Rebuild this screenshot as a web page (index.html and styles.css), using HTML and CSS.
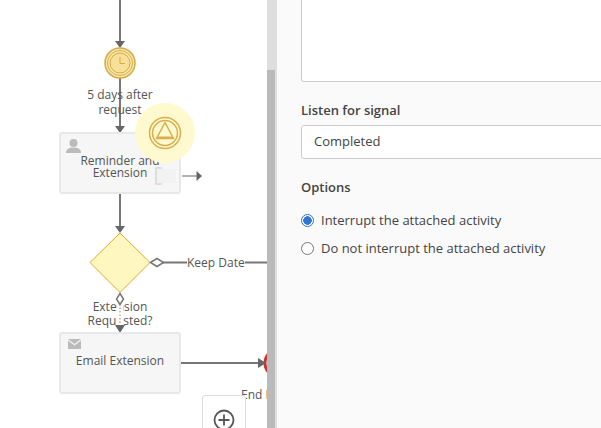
FILE: index.html
```html
<!DOCTYPE html>
<html lang="en">
<head>
<meta charset="utf-8">
<title>Signal event</title>
<link rel="stylesheet" href="styles.css">
</head>
<body>
<div class="app">
  <div class="canvas">
    <svg class="flows" width="267" height="428" viewBox="0 0 267 428">
      <g fill="none" stroke="#777" stroke-width="2">
        <path d="M120 0V42"/>
        <path d="M120 78V126"/>
        <path d="M120 193V226"/>
        <path d="M163 262.500H267"/>
        <path d="M180 363H258"/>
      </g>
      <path d="M182 176H197" stroke="#999" stroke-width="1.500" fill="none"/>
      <g fill="#666">
        <path d="M115 41h10l-5 7z"/>
        <path d="M115 126h10l-5 7z"/>
        <path d="M115 226h10l-5 7z"/>
        <path d="M196.500 171l5.500 5-5.500 5z"/>
      </g>
      <circle cx="120" cy="63" r="15" fill="#f9e8ae" stroke="#d5ab43" stroke-width="1.500"/>
      <circle cx="120" cy="63" r="12.500" fill="none" stroke="#d5ab43"/>
      <circle cx="120" cy="63" r="10" fill="#f8e09a" stroke="#d5ab43"/>
      <path d="M120 57v6.500h5" fill="none" stroke="#d5ab43" stroke-width="1"/>
      <path d="M120 233l30 29.500-30 30-30-30z" fill="#fff7c0" stroke="#dfa930" stroke-width="1"/>
      <circle cx="279" cy="363" r="14" fill="#fff" stroke="#c53535" stroke-width="3"/>
      <path d="M258 358l8 5-8 5z" fill="#666"/>
    </svg>

    <div class="label timer-label">5 days after<br>request</div>

    <div class="task task-one">
      <svg class="task-icon" width="15" height="14" viewBox="0 0 15 14"><circle cx="7.500" cy="4" r="4" fill="#bbb"/><path d="M0 14c0-4 3-5.500 7.500-5.500s7.500 1.500 7.500 5.500z" fill="#bbb"/></svg>
      <div class="task-name">Reminder and<br>Extension</div>
      <div class="marker"></div>
    </div>

    <div class="halo">
      <svg width="34" height="34" viewBox="0 0 34 34"><circle cx="17" cy="17" r="15.500" fill="none" stroke="#d9ae4c" stroke-width="1.500"/><circle cx="17" cy="17" r="12.500" fill="none" stroke="#d9ae4c" stroke-width="1.500"/><path d="M17 6.500L25.500 22.500H8.500z" fill="none" stroke="#d9ae4c" stroke-width="1.500"/><path d="M9 21.500H25" stroke="#d9ae4c" stroke-width="2"/></svg>
    </div>

    <div class="label keep-label">Keep Date</div>
    <div class="label gate-label">Extension<br>Requested?</div>

    <svg class="default-flow" width="267" height="428" viewBox="0 0 267 428">
      <path d="M120 304V326" stroke="#fff" stroke-width="6" fill="none"/>
      <path d="M120 304V326" stroke="#888" stroke-width="1" stroke-dasharray="1.500 2" fill="none"/>
      <path d="M115 325h10l-5 8z" fill="#666"/>
      <path d="M150.500 262.500l6.500-4 6.500 4-6.500 4z M120 293.500l3.500 5.500-3.500 5.500-3.500-5.500z" fill="#fff" stroke="#777" stroke-width="1.500"/>
    </svg>

    <div class="task task-two">
      <svg class="task-icon mail" width="13" height="10" viewBox="0 0 13 10"><path d="M0 0h13L6.500 5z" fill="#bbb"/><path d="M0 1.500V10h13V1.500L6.500 6.500z" fill="#bbb"/></svg>
      <div class="task-name">Email Extension</div>
    </div>

    <div class="label end-label">End Process</div>

    <div class="zoom-box">
      <svg width="22" height="22" viewBox="0 0 22 22"><circle cx="11" cy="11" r="9.500" fill="none" stroke="#555" stroke-width="1.800"/><path d="M11 5.500v11M5.500 11h11" stroke="#555" stroke-width="1.800"/></svg>
    </div>
  </div>

  <div class="scrollbar"><div class="thumb"></div></div>

  <div class="panel">
    <div class="textarea"></div>
    <div class="field-title">Listen for signal</div>
    <div class="select">Completed</div>
    <div class="field-title options-title">Options</div>
    <label class="radio-row"><span class="radio checked"></span>Interrupt the attached activity</label>
    <label class="radio-row"><span class="radio"></span>Do not interrupt the attached activity</label>
  </div>
</div>
</body>
</html>
```
FILE: styles.css
```css
html, body {
  margin: 0;
  padding: 0;
  height: 100%;
  overflow: hidden;
}
body {
  font-family: "Open Sans", sans-serif;
  font-size: 13px;
  color: #444;
  background: #fff;
}
.app {
  display: flex;
  height: 428px;
  width: 601px;
  overflow: hidden;
}
.canvas {
  position: relative;
  width: 267px;
  flex: none;
  height: 428px;
  overflow: hidden;
  background: #fff;
}
.flows,
.default-flow {
  position: absolute;
  left: 0;
  top: 0;
}
.label {
  position: absolute;
  font-size: 12px;
  line-height: 15px;
  text-align: center;
  color: #555;
  white-space: nowrap;
}
.timer-label {
  left: 60px;
  width: 120px;
  top: 87px;
}
.keep-label {
  left: 187px;
  top: 255px;
  background: #fff;
}
.gate-label {
  left: 60px;
  width: 120px;
  top: 300px;
  line-height: 14px;
}
.end-label {
  left: 241px;
  top: 387px;
}
.task {
  position: absolute;
  left: 59px;
  width: 118px;
  height: 58px;
  background: #f6f6f6;
  border: 2px solid #e8e8e8;
  border-radius: 3px;
  text-align: center;
  font-size: 12px;
  line-height: 12px;
  color: #555;
}
.task-one { top: 132px; }
.task-two { top: 332px; }
.task-icon {
  position: absolute;
  left: 5px;
  top: 5px;
}
.task-icon.mail {
  left: 7px;
  top: 5px;
}
.task-name { margin-top: 21px; }
.marker {
  position: absolute;
  left: 96px;
  top: 35px;
  width: 19px;
  height: 14px;
  background: #f2f2f2;
}
.marker::before {
  content: "";
  position: absolute;
  left: -2px;
  top: -2px;
  width: 5px;
  height: 14px;
  border: 2px solid #ddd;
  border-right: 0;
  border-radius: 2px 0 0 2px;
}
.halo {
  position: absolute;
  left: 135px;
  top: 103px;
  width: 60px;
  height: 60px;
  border-radius: 50%;
  background: #fff9cf;
  display: flex;
  align-items: center;
  justify-content: center;
}
.zoom-box {
  position: absolute;
  left: 202px;
  top: 395px;
  width: 44px;
  height: 42px;
  box-sizing: border-box;
  background: #fff;
  border: 1px solid #ddd;
  border-radius: 3px 3px 0 0;
  display: flex;
  justify-content: center;
  padding-top: 13px;
}
.scrollbar {
  width: 10px;
  flex: none;
  background: #dedede;
}
.thumb {
  margin-top: 70px;
  width: 8px;
  height: 358px;
  background: #bababa;
}
.panel {
  flex: 1;
  background: #fafafa;
  padding-left: 24px;
  min-width: 0;
}
.textarea {
  height: 82px;
  width: 320px;
  box-sizing: border-box;
  background: #fff;
  border: 1px solid #ccc;
  border-top: 0;
  border-radius: 0 0 3px 3px;
}
.field-title {
  font-weight: 600;
  font-size: 13px;
  line-height: 18px;
  color: #444;
  margin-top: 19px;
}
.select {
  margin-top: 6px;
  height: 34px;
  width: 320px;
  box-sizing: border-box;
  background: #fff;
  border: 1px solid #ccc;
  border-radius: 3px;
  padding-left: 12px;
  line-height: 30px;
  color: #444;
}
.options-title { margin-top: 19px; }
.radio-row {
  display: flex;
  align-items: center;
  gap: 7px;
  height: 28px;
  color: #444;
}
.options-title + .radio-row { margin-top: 10px; }
.radio {
  width: 13px;
  height: 13px;
  box-sizing: border-box;
  border: 1px solid #777;
  border-radius: 50%;
  background: #fff;
  flex: none;
}
.radio.checked {
  border-color: #2e75d4;
  background: radial-gradient(circle, #2e75d4 0 4px, #fff 4.500px);
}
```
